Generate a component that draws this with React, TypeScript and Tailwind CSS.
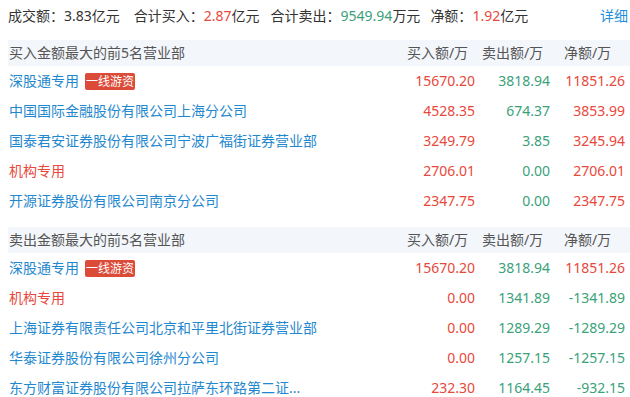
import React from "react";

type Row = {
  name: string;
  tag?: string;
  inst?: boolean;
  buy: string;
  sell: string;
  net: string;
};

const BUY_ROWS: Row[] = [
  { name: "深股通专用", tag: "一线游资", buy: "15670.20", sell: "3818.94", net: "11851.26" },
  { name: "中国国际金融股份有限公司上海分公司", buy: "4528.35", sell: "674.37", net: "3853.99" },
  { name: "国泰君安证券股份有限公司宁波广福街证券营业部", buy: "3249.79", sell: "3.85", net: "3245.94" },
  { name: "机构专用", inst: true, buy: "2706.01", sell: "0.00", net: "2706.01" },
  { name: "开源证券股份有限公司南京分公司", buy: "2347.75", sell: "0.00", net: "2347.75" },
];

const SELL_ROWS: Row[] = [
  { name: "深股通专用", tag: "一线游资", buy: "15670.20", sell: "3818.94", net: "11851.26" },
  { name: "机构专用", inst: true, buy: "0.00", sell: "1341.89", net: "-1341.89" },
  { name: "上海证券有限责任公司北京和平里北街证券营业部", buy: "0.00", sell: "1289.29", net: "-1289.29" },
  { name: "华泰证券股份有限公司徐州分公司", buy: "0.00", sell: "1257.15", net: "-1257.15" },
  { name: "东方财富证券股份有限公司拉萨东环路第二证...", buy: "232.30", sell: "1164.45", net: "-932.15" },
];

const RED = "text-[#e8483b]";
const GREEN = "text-[#3aa27a]";

function Section({ title, rows }: { title: string; rows: Row[] }) {
  return (
    <div>
      <div className="grid h-[26px] grid-cols-[1fr_75px_75px_75px] items-center bg-[#f3f6fa] pr-[5px] text-[#555]">
        <span className="pl-[1px]">{title}</span>
        <span className="text-center">买入额/万</span>
        <span className="text-center">卖出额/万</span>
        <span className="text-center">净额/万</span>
      </div>
      {rows.map((r, i) => (
        <div key={i} className="grid h-[30px] grid-cols-[1fr_75px_75px_75px] items-center pr-[5px]">
          <div className="flex min-w-0 items-center gap-[6px] pl-[1px]">
            <span className={r.inst ? RED : "text-[#1f88cf]"}>{r.name}</span>
            {r.tag && (
              <span className="rounded-[2px] bg-[#dc4a38] px-[1px] text-[12px] leading-[17px] text-white">
                {r.tag}
              </span>
            )}
          </div>
          <span className={`text-right ${RED}`}>{r.buy}</span>
          <span className={`text-right ${GREEN}`}>{r.sell}</span>
          <span className={`text-right ${r.net.startsWith("-") ? GREEN : RED}`}>{r.net}</span>
        </div>
      ))}
    </div>
  );
}

export default function App() {
  return (
    <div
      className="h-[397px] w-[630px] overflow-hidden bg-white pl-[8px] text-[14px] leading-[20px] text-[#333]"
      style={{ fontFamily: '"Noto Sans", "Noto Sans CJK SC", sans-serif' }}
    >
      <div className="flex h-[32px] items-center">
        <span className="mr-[14px]">成交额：3.83亿元</span>
        <span className="mr-[11px]">
          合计买入：<span className={RED}>2.87</span>亿元
        </span>
        <span className="mr-[10px]">
          合计卖出：<span className={GREEN}>9549.94</span>万元
        </span>
        <span>
          净额：<span className={RED}>1.92</span>亿元
        </span>
        <span className="ml-auto pr-[2px] text-[#1f8fdc]">详细</span>
      </div>
      <div className="mt-[8px]">
        <Section title="买入金额最大的前5名营业部" rows={BUY_ROWS} />
      </div>
      <div className="mt-[11px]">
        <Section title="卖出金额最大的前5名营业部" rows={SELL_ROWS} />
      </div>
    </div>
  );
}
